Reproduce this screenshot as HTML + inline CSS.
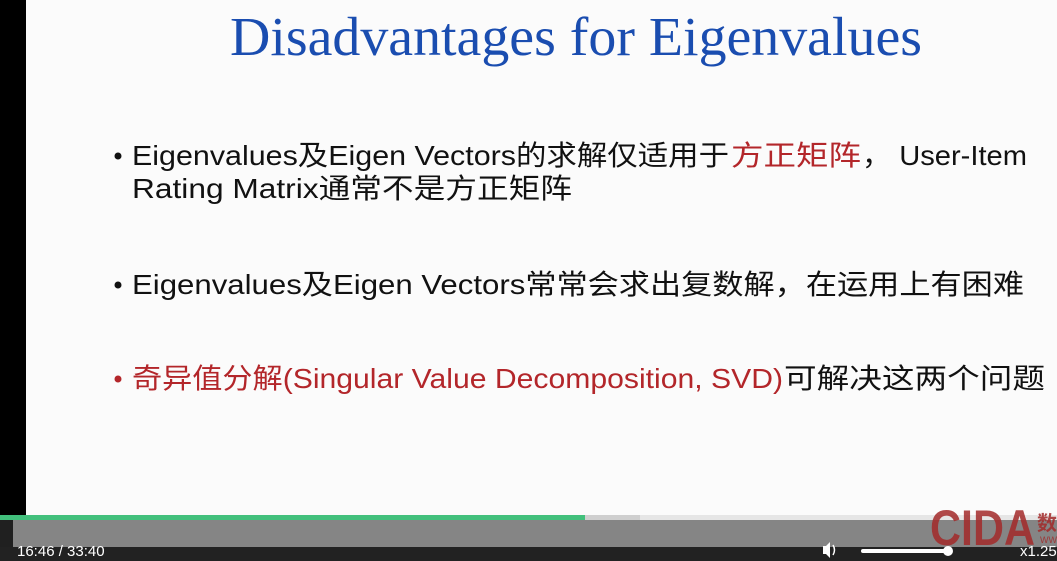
<!DOCTYPE html>
<html><head><meta charset="utf-8"><style>
html,body{margin:0;padding:0;width:1057px;height:561px;overflow:hidden;background:#fff}
svg{display:block}
.t{font-family:"Liberation Sans","Noto Sans CJK SC",sans-serif;font-size:28px;fill:#111}
.r{fill:#b3262a}
</style></head><body>
<svg width="1057" height="561" viewBox="0 0 1057 561" xmlns="http://www.w3.org/2000/svg">
<rect x="0" y="0" width="1057" height="561" fill="#fbfbfb"/>
<rect x="0" y="0" width="26" height="520" fill="#000"/>
<text x="230" y="55" textLength="692" lengthAdjust="spacingAndGlyphs" style="font-family:'Liberation Serif',serif;font-size:55px;fill:#1a4db0">Disadvantages for Eigenvalues</text>

<circle cx="118" cy="156" r="3.5" fill="#111"/>
<text class="t" x="132" y="165" textLength="597" lengthAdjust="spacingAndGlyphs">Eigenvalues及Eigen Vectors的求解仅适用于</text>
<text class="t r" x="731" y="165" textLength="130" lengthAdjust="spacingAndGlyphs">方正矩阵</text>
<text class="t" x="862" y="165" textLength="165" lengthAdjust="spacingAndGlyphs">， User-Item</text>
<text class="t" x="132" y="198" textLength="440" lengthAdjust="spacingAndGlyphs">Rating Matrix通常不是方正矩阵</text>

<circle cx="118" cy="285" r="3.5" fill="#111"/>
<text class="t" x="132" y="294" textLength="892" lengthAdjust="spacingAndGlyphs">Eigenvalues及Eigen Vectors常常会求出复数解，在运用上有困难</text>

<circle cx="118" cy="379" r="3.5" fill="#b3262a"/>
<text class="t r" x="132" y="388" textLength="651" lengthAdjust="spacingAndGlyphs">奇异值分解(Singular Value Decomposition, SVD)</text>
<text class="t" x="784" y="388" textLength="261" lengthAdjust="spacingAndGlyphs">可解决这两个问题</text>

<!-- player -->
<rect x="0" y="515" width="585" height="5" fill="#42c07c"/>
<rect x="585" y="515" width="55" height="5" fill="#cfcfcf"/>
<rect x="640" y="515" width="417" height="5" fill="#e6e6e6"/>
<rect x="0" y="520" width="1057" height="27" fill="#858585"/>
<rect x="0" y="520" width="13" height="27" fill="#202020"/>
<rect x="0" y="547" width="1057" height="14" fill="#222"/>
<text x="930" y="545" style="font-family:'Liberation Sans',sans-serif;font-size:50px;font-weight:bold;fill:#a32a2a;opacity:.85" textLength="105" lengthAdjust="spacingAndGlyphs">CIDA</text>
<text x="1037" y="530" style="font-family:'Noto Sans CJK SC',sans-serif;font-size:20px;font-weight:bold;fill:#a32a2a;opacity:.85">数</text>
<text x="1040" y="543" style="font-family:'Liberation Sans',sans-serif;font-size:9px;fill:#a32a2a;opacity:.85">WW</text>
<text x="17" y="556" style="font-family:'Liberation Sans',sans-serif;font-size:15px;fill:#fff">16:46 / 33:40</text>
<path d="M823 546h3l4-4v16l-4-4h-3z" fill="#fff"/>
<path d="M833 545q3 5 0 10" stroke="#fff" stroke-width="1.5" fill="none"/>
<rect x="861" y="549" width="88" height="4" rx="2" fill="#fff"/>
<circle cx="948" cy="551" r="5" fill="#fff"/>
<text x="1020" y="556" style="font-family:'Liberation Sans',sans-serif;font-size:15px;fill:#fff">x1.25</text>
</svg>
</body></html>
